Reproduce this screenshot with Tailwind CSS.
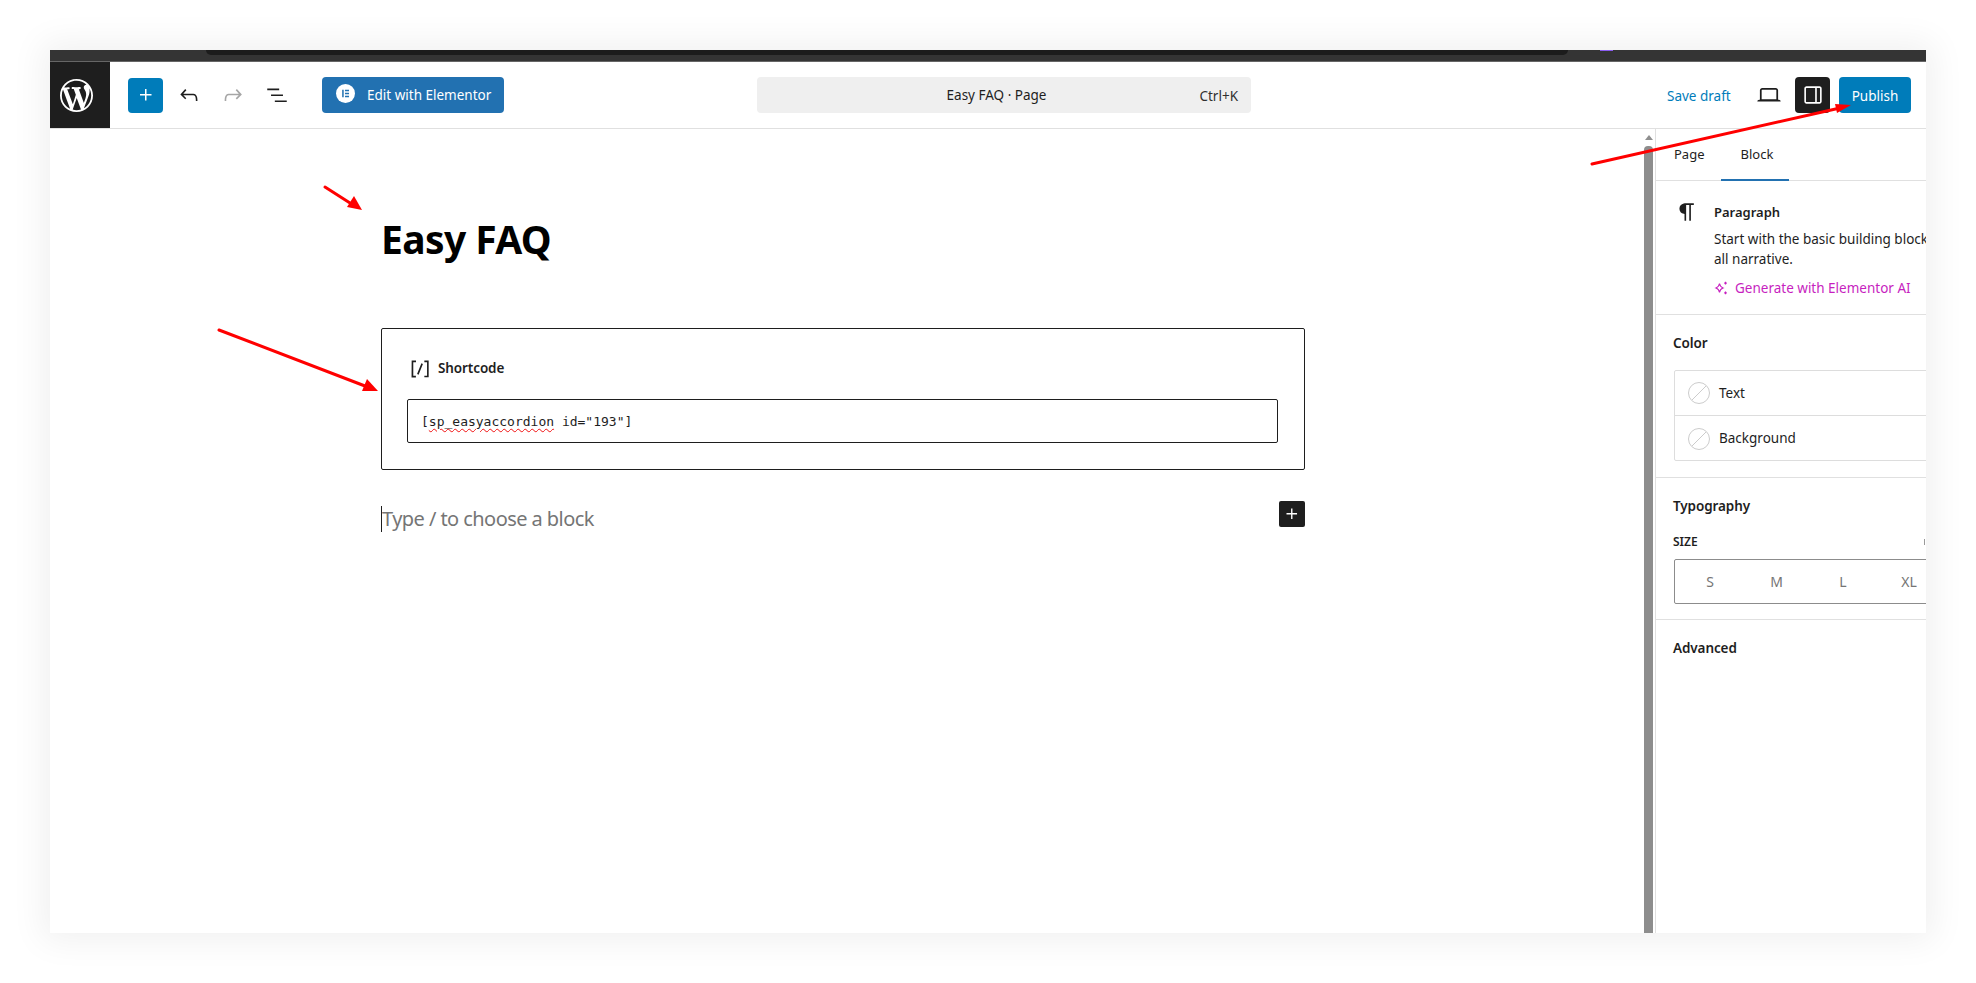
<!DOCTYPE html>
<html lang="en">
<head>
    <meta charset="UTF-8">
    <meta name="viewport" content="width=device-width, initial-scale=1.0">
    <script src="https://cdn.jsdelivr.net/npm/@tailwindcss/browser@4"></script>
    <title>Easy FAQ</title>
</head>
<body class="bg-white h-[983px] overflow-hidden font-['Noto_Sans','Open_Sans',sans-serif] text-[#1e1e1e]">
    <div class="relative">
        <!-- Editor window -->
        <div class="ml-[50px] mt-[50px] w-[1876px] h-[883px] bg-white shadow-[0_0_32px_8px_rgba(0,0,0,0.06)] flex flex-col overflow-hidden absolute top-0 left-0">
            <!-- Top dark strip -->
            <div class="h-[12px] bg-[#343434] border-b border-[#666] shrink-0 relative">
                <div class="ml-[156px] w-[1362px] h-[5px] bg-[#1c1c1c] rounded-b-lg"></div>
                <div class="absolute left-[1550px] top-0 w-[13px] h-[1px] bg-[#8a5cf0]"></div>
            </div>

            <!-- Toolbar -->
            <div class="h-[67px] shrink-0 border-b border-[#e0e0e0] flex items-center">
                <div class="w-[60px] h-[66px] bg-[#1e1e1e] flex items-center pl-[10px] shrink-0">
                    <svg class="w-[33px] h-[33px]" viewBox="0 0 20 20" fill="#fff"><path d="M20 10c0-5.51-4.49-10-10-10C4.48 0 0 4.49 0 10c0 5.52 4.48 10 10 10 5.51 0 10-4.48 10-10zM7.78 15.37L4.37 6.22c.55-.02 1.17-.08 1.17-.08.5-.06.44-1.13-.06-1.11 0 0-1.45.11-2.37.11-.18 0-.37 0-.58-.01C4.12 2.69 6.87 1.11 10 1.11c2.33 0 4.45.87 6.05 2.34-.68-.11-1.65.39-1.65 1.58 0 .74.45 1.36.9 2.1.35.61.55 1.36.55 2.46 0 1.49-1.4 5-1.4 5l-3.03-8.37c.54-.02.82-.17.82-.17.5-.05.44-1.25-.06-1.22 0 0-1.44.12-2.38.12-.87 0-2.33-.12-2.33-.12-.5-.03-.56 1.2-.06 1.22l.92.08 1.26 3.41zM17.41 10c.24-.64.74-1.87.43-4.25.7 1.29 1.05 2.71 1.05 4.25 0 3.29-1.73 6.24-4.4 7.78.97-2.59 1.94-5.2 2.92-7.78zM6.1 18.09C3.12 16.65 1.11 13.53 1.11 10c0-1.3.23-2.48.72-3.59C3.25 10.3 4.67 14.2 6.1 18.09zm4.03-6.63l2.58 6.98c-.86.29-1.76.45-2.71.45-.79 0-1.57-.11-2.29-.33.81-2.38 1.62-4.74 2.42-7.1z"/></svg>
                </div>
                <button class="ml-[18px] w-[35px] h-[35px] bg-[#007cba] rounded-sm flex items-center justify-center shrink-0">
                    <svg class="w-[24px] h-[24px]" viewBox="0 0 24 24" fill="#fff"><path d="M11 12.5V17.5H12.5V12.5H17.5V11H12.5V6H11V11H6V12.5H11Z"/></svg>
                </button>
                <svg class="ml-[13px] w-[26px] h-[26px] shrink-0" viewBox="0 0 24 24" fill="#1e1e1e"><path d="M18.3 11.7c-.6-.6-1.4-.9-2.3-.9H6.7l2.9-3.3-1.1-1-4.5 5L8.5 16l1-1-2.7-2.7H16c.5 0 .9.2 1.3.5 1 1 1 3.4 1 4.5v.3h1.5v-.2c0-1.5 0-4.3-1.5-5.7z"/></svg>
                <svg class="ml-[18px] w-[26px] h-[26px] shrink-0" viewBox="0 0 24 24" fill="#a6a6a6"><path d="M15.6 6.5l-1.1 1 2.9 3.3H8c-.9 0-1.7.3-2.3.9-1.4 1.5-1.4 4.2-1.4 5.6v.2h1.5v-.3c0-1.1 0-3.5 1-4.5.3-.3.7-.5 1.3-.5h9.2L14.5 15l1.1 1.1 4.6-4.6-4.6-5z"/></svg>
                <svg class="ml-[18px] w-[26px] h-[26px] shrink-0" viewBox="0 0 24 24" fill="#1e1e1e"><path d="M3 6h11v1.5H3V6Zm3.5 5.5h11V13h-11v-1.5ZM21 17H10v1.5h11V17Z"/></svg>
                <button class="ml-[32px] w-[182px] h-[36px] bg-[#2271b1] rounded-sm flex items-center shrink-0 text-white text-[13.5px] pl-[14px]">
                    <svg class="w-[19px] h-[19px] mb-[3px]" viewBox="0 0 20 20"><circle cx="10" cy="10" r="10" fill="#fff"/><path fill="#2271b1" d="M6.5 6h1.6v8H6.5zM9.5 6h4.2v1.6H9.5zM9.5 9.2h4.2v1.6H9.5zM9.5 12.4h4.2V14H9.5z"/></svg>
                    <span class="ml-[12px] whitespace-nowrap">Edit with Elementor</span>
                </button>
                <div class="ml-[253px] w-[494px] h-[36px] bg-[#efefef] rounded-sm relative flex items-center justify-center shrink-0 text-[13.5px] pr-[15px] pt-[1px]">
                    <span class="whitespace-nowrap">Easy FAQ · Page</span>
                    <span class="absolute right-[13px] top-[9px] text-[#2f2f2f] whitespace-nowrap">Ctrl+K</span>
                </div>
                <span class="ml-[416px] text-[13.5px] text-[#007cba] whitespace-nowrap w-[62px] shrink-0 pt-[2px]">Save draft</span>
                <svg class="ml-[26px] w-[28px] h-[28px] shrink-0" viewBox="0 0 24 24" fill="#1e1e1e"><path d="M20.5 16h-.7V8c0-1.1-.9-2-2-2H6.2c-1.1 0-2 .9-2 2v8h-.7c-.8 0-1.5.7-1.5 1.5h20c0-.8-.7-1.5-1.5-1.5zM5.7 8c0-.3.2-.5.5-.5h11.6c.3 0 .5.2.5.5v7.6H5.7V8z"/></svg>
                <button class="ml-[12px] w-[35px] h-[36px] bg-[#1e1e1e] rounded-sm flex items-center justify-center shrink-0">
                    <svg class="w-[26px] h-[26px]" viewBox="0 0 24 24" fill="#fff"><path d="M18 4H6c-1.1 0-2 .9-2 2v12c0 1.1.9 2 2 2h12c1.1 0 2-.9 2-2V6c0-1.1-.9-2-2-2zm-4 14.5H6c-.3 0-.5-.2-.5-.5V6c0-.3.2-.5.5-.5h8v13zm4.5-.5c0 .3-.2.5-.5.5h-2.5v-13H18c.3 0 .5.2.5.5v12z"/></svg>
                </button>
                <button class="ml-[9px] w-[72px] h-[36px] bg-[#007cba] rounded-sm text-white text-[13.5px] shrink-0 pt-[2px]">Publish</button>
            </div>

            <!-- Body -->
            <div class="flex flex-1 min-h-0">
                <!-- Canvas -->
                <div class="w-[1594px] shrink-0 pl-[331px] pr-[339px]">
                    <h1 class="mt-[82px] h-[56px] text-[39px] leading-[56px] font-bold text-black tracking-[-0.6px]">Easy FAQ</h1>

                    <!-- Shortcode block -->
                    <div class="mt-[61px] h-[142px] border border-[#1e1e1e] rounded-[2px] pl-[25px] pr-[26px]">
                        <div class="h-[70px] flex items-center pt-[9px]">
                            <svg class="w-[26px] h-[26px]" viewBox="0 0 24 24" fill="#1e1e1e"><path d="M16 4.2v1.5h2.5v12.5H16v1.5h4V4.2h-4zM4.2 19.8h4v-1.5H5.8V5.8h2.5V4.2h-4l-.1 15.6zm5.1-3.1l1.4.6 4-10-1.4-.6-4 10z"/></svg>
                            <span class="ml-[5px] text-[13.5px] font-semibold tracking-[-0.1px]">Shortcode</span>
                        </div>
                        <div class="h-[44px] border border-[#1e1e1e] rounded-[2px] pl-[13px] pt-[1px] flex items-center font-['DejaVu_Sans_Mono',monospace] text-[13px] text-[#1e1e1e] whitespace-pre">
                            <span>[</span><span class="underline decoration-wavy decoration-[#f01010] decoration-1 underline-offset-2">sp_easyaccordion</span><span> id="193"]</span>
                        </div>
                    </div>

                    <!-- Empty paragraph -->
                    <div class="mt-[31px] h-[31px] flex items-start justify-between">
                        <span class="mt-[5px] h-[26px] border-l border-[#1e1e1e] text-[20px] leading-[26px] text-[#757575] tracking-[-0.56px]">Type / to choose a block</span>
                        <button class="w-[26px] h-[26px] bg-[#1e1e1e] rounded-[2px] flex items-center justify-center">
                            <svg class="w-[22px] h-[22px]" viewBox="0 0 24 24" fill="#fff"><path d="M11 12.5V17.5H12.5V12.5H17.5V11H12.5V6H11V11H6V12.5H11Z"/></svg>
                        </button>
                    </div>
                </div>

                <!-- Scrollbar -->
                <div class="w-[9px] shrink-0 flex flex-col items-center">
                    <div class="mt-[6px] w-0 h-0 border-x-[4px] border-x-transparent border-b-[5px] border-b-[#8f8f8f]"></div>
                    <div class="mt-[6px] w-[9px] flex-1 bg-[#8d8d8d] rounded-t-[4px]"></div>
                </div>

                <!-- Sidebar -->
                <div class="ml-[2px] border-l border-[#e0e0e0] w-[271px] shrink-0 overflow-hidden">
                    <div class="w-[290px]">
                        <div class="h-[52px] border-b border-[#e0e0e0] flex text-[13px] relative">
                            <span class="ml-[18px] mt-[16px]">Page</span>
                            <span class="ml-[36px] mt-[16px]">Block</span>
                            <div class="absolute left-[65px] bottom-[-1px] w-[68px] h-[2px] bg-[#2271b1]"></div>
                        </div>

                        <div class="h-[134px] border-b border-[#e0e0e0] flex pl-[19px]">
                            <svg class="mt-[18px] ml-[-1px] w-[26px] h-[26px] shrink-0" viewBox="0 0 24 24" fill="#1e1e1e"><path d="M18.3 4H9.9v-.1l-.9.2c-2.3.4-4 2.4-4 4.8s1.7 4.4 4 4.8l.7.1V20h1.5V5.5h2.9V20h1.5V5.5h2.7V4z"/></svg>
                            <div class="ml-[14px] whitespace-nowrap text-[13.5px] leading-[20px]">
                                <p class="mt-[21px] text-[13px] font-semibold">Paragraph</p>
                                <p class="mt-[7px]">Start with the basic building block</p>
                                <p>all narrative.</p>
                                <p class="mt-[9px] text-[#c71fc0] flex items-center">
                                    <svg class="w-[14px] h-[14px] mr-[7px]" viewBox="0 0 14 14" fill="none" stroke="#c71fc0" stroke-width="1.1"><path d="M5.5 2.5 C5.9 5 6.6 6 9 6.9 C6.6 7.8 5.9 8.8 5.5 11.3 C5.1 8.8 4.4 7.8 2 6.9 C4.4 6 5.1 5 5.5 2.5Z"/><path d="M11.5 .8v2.6M10.2 2.1h2.6M11.5 10.6v2.6M10.2 11.9h2.6" stroke-width="1.2"/></svg>
                                    Generate with Elementor AI
                                </p>
                            </div>
                        </div>

                        <div class="h-[163px] border-b border-[#e0e0e0] pl-[17px] pt-[18px]">
                            <p class="text-[13.5px] leading-[20px] font-semibold tracking-[-0.1px]">Color</p>
                            <div class="mt-[17px] ml-[1px] h-[91px] border border-[#ddd] rounded-[2px] text-[13.5px]">
                                <div class="h-[45px] border-b border-[#ddd] flex items-center pl-[13px]">
                                    <svg class="w-[22px] h-[22px]" viewBox="0 0 22 22" fill="none" stroke="#ccc"><circle cx="11" cy="11" r="10.5"/><path d="M4 18 18 4"/></svg>
                                    <span class="ml-[9px]">Text</span>
                                </div>
                                <div class="h-[45px] flex items-center pl-[13px]">
                                    <svg class="w-[22px] h-[22px]" viewBox="0 0 22 22" fill="none" stroke="#ccc"><circle cx="11" cy="11" r="10.5"/><path d="M4 18 18 4"/></svg>
                                    <span class="ml-[9px]">Background</span>
                                </div>
                            </div>
                        </div>

                        <div class="h-[142px] border-b border-[#e0e0e0] pl-[17px] pt-[18px] relative">
                            <p class="text-[13.5px] leading-[20px] font-semibold tracking-[-0.1px]">Typography</p>
                            <p class="mt-[19px] text-[12px] leading-[14px] font-semibold">SIZE</p>
                            <div class="mt-[10px] ml-[1px] h-[45px] border border-[#8c8c8c] rounded-[2px] flex items-center text-[14px] text-[#757575]">
                                <span class="w-[66px] ml-[2px] text-center">S</span>
                                <span class="w-[67px] text-center">M</span>
                                <span class="w-[66px] text-center">L</span>
                                <span class="w-[66px] text-center">XL</span>
                            </div>
                            <div class="absolute left-[268px] top-[61px] w-[1px] h-[6px] bg-[#999]"></div>
                        </div>

                        <div class="pt-[18px] pl-[17px]">
                            <p class="text-[13.5px] leading-[20px] font-semibold tracking-[-0.1px]">Advanced</p>
                        </div>
                    </div>
                </div>
            </div>
        </div>

        <!-- Red annotation arrows, drawn over the editor -->
        <svg class="absolute top-0 left-0 w-[1976px] h-[983px] pointer-events-none" viewBox="0 0 1976 983" fill="#ff0000" stroke="none">
            <path d="M325 187 350 203" stroke="#ff0000" stroke-width="3" stroke-linecap="round"/>
            <path d="M362 210 347 207 354 196Z"/>
            <path d="M219 330 365 386" stroke="#ff0000" stroke-width="3" stroke-linecap="round"/>
            <path d="M378 391 362 391 367 379Z"/>
            <path d="M1592 164 1840 108" stroke="#ff0000" stroke-width="3" stroke-linecap="round"/>
            <path d="M1851 105 1837 113 1835 104Z"/>
        </svg>
    </div>
</body>
</html>
